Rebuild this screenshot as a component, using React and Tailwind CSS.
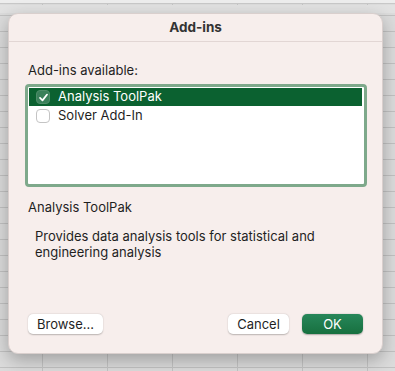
export default function App() {
  const font = { fontFamily: "Inter, 'Noto Sans', sans-serif" };
  return (
    <div
      className="relative w-[395px] h-[371px] overflow-hidden bg-[#dcdcdc]"
      style={font}
    >
      {/* spreadsheet grid background */}
      <div className="absolute inset-0 bg-[repeating-linear-gradient(to_bottom,transparent_0px,transparent_15px,#c2c2c2_15px,#c2c2c2_16px)]" />
      <div className="absolute inset-0 bg-[repeating-linear-gradient(to_right,transparent_0px,transparent_42px,#c4c4c4_42px,#c4c4c4_43px,transparent_43px,transparent_65px)] bg-[position:0_0]" />
      <div className="absolute left-0 right-0 top-0 h-[4px] bg-[#ededed] border-b border-[#c8c8c8]" />
      <div className="absolute left-0 right-0 top-[5px] h-[8px] bg-[#e2e2e2]" />

      {/* dialog */}
      <div className="relative ml-[8px] mt-[13px] w-[375px] h-[341px] rounded-[10px] bg-[#f7eeec] border border-[#d9cfcd] shadow-[0_6px_18px_rgba(0,0,0,0.28)] flex flex-col text-[13px] text-[#1f1f1f]">
        <div className="h-[28px] flex items-center justify-center border-b border-[#e2d6d4] font-bold text-[#333] text-[13.5px]">
          Add-ins
        </div>
        <div className="ml-[19px] mt-[20px] leading-[16px]">Add-ins available:</div>
        <div className="ml-[16px] mt-[6px] w-[342px] h-[103px] rounded-[4px] border-[3px] border-[#7ea98b] bg-white p-[1px] pr-[2px]">
          <div className="h-[18px] bg-[#0b6130] flex items-center text-white">
            <div className="ml-[7px] w-[14px] h-[14px] rounded-[4px] bg-[#3a805a] border border-[#4e8d69] flex items-center justify-center">
              <svg width="11" height="11" viewBox="0 0 12 12">
                <path d="M2.2 6.4 L4.9 9.1 L9.9 2.8" fill="none" stroke="#fff" strokeWidth="1.9" strokeLinecap="round" strokeLinejoin="round" />
              </svg>
            </div>
            <span className="ml-[8px]">Analysis ToolPak</span>
          </div>
          <div className="h-[18px] mt-[1px] flex items-center">
            <div className="ml-[7px] w-[14px] h-[14px] rounded-[4px] bg-white border border-[#c4c4c4]" />
            <span className="ml-[8px]">Solver Add-In</span>
          </div>
        </div>
        <div className="ml-[19px] mt-[12px] leading-[16px]">Analysis ToolPak</div>
        <div className="ml-[26px] mt-[13px] leading-[16px] w-[300px]">
          Provides data analysis tools for statistical and engineering analysis
        </div>
        <div className="mt-auto mb-[19px] mx-[19px] flex items-center">
          <button className="w-[75px] h-[20px] rounded-[5px] bg-white shadow-[0_0.5px_1.5px_rgba(0,0,0,0.25)] text-[13px] text-[#1f1f1f] leading-[20px]">
            Browse...
          </button>
          <div className="flex-1" />
          <button className="w-[61px] h-[20px] rounded-[5px] bg-white shadow-[0_0.5px_1.5px_rgba(0,0,0,0.25)] text-[13px] text-[#1f1f1f] leading-[20px]">
            Cancel
          </button>
          <button className="ml-[13px] w-[61px] h-[20px] rounded-[5px] bg-gradient-to-b from-[#27875a] to-[#17703f] shadow-[0_0.5px_1.5px_rgba(0,0,0,0.3)] text-[13px] text-white leading-[20px]">
            OK
          </button>
        </div>
      </div>
    </div>
  );
}
